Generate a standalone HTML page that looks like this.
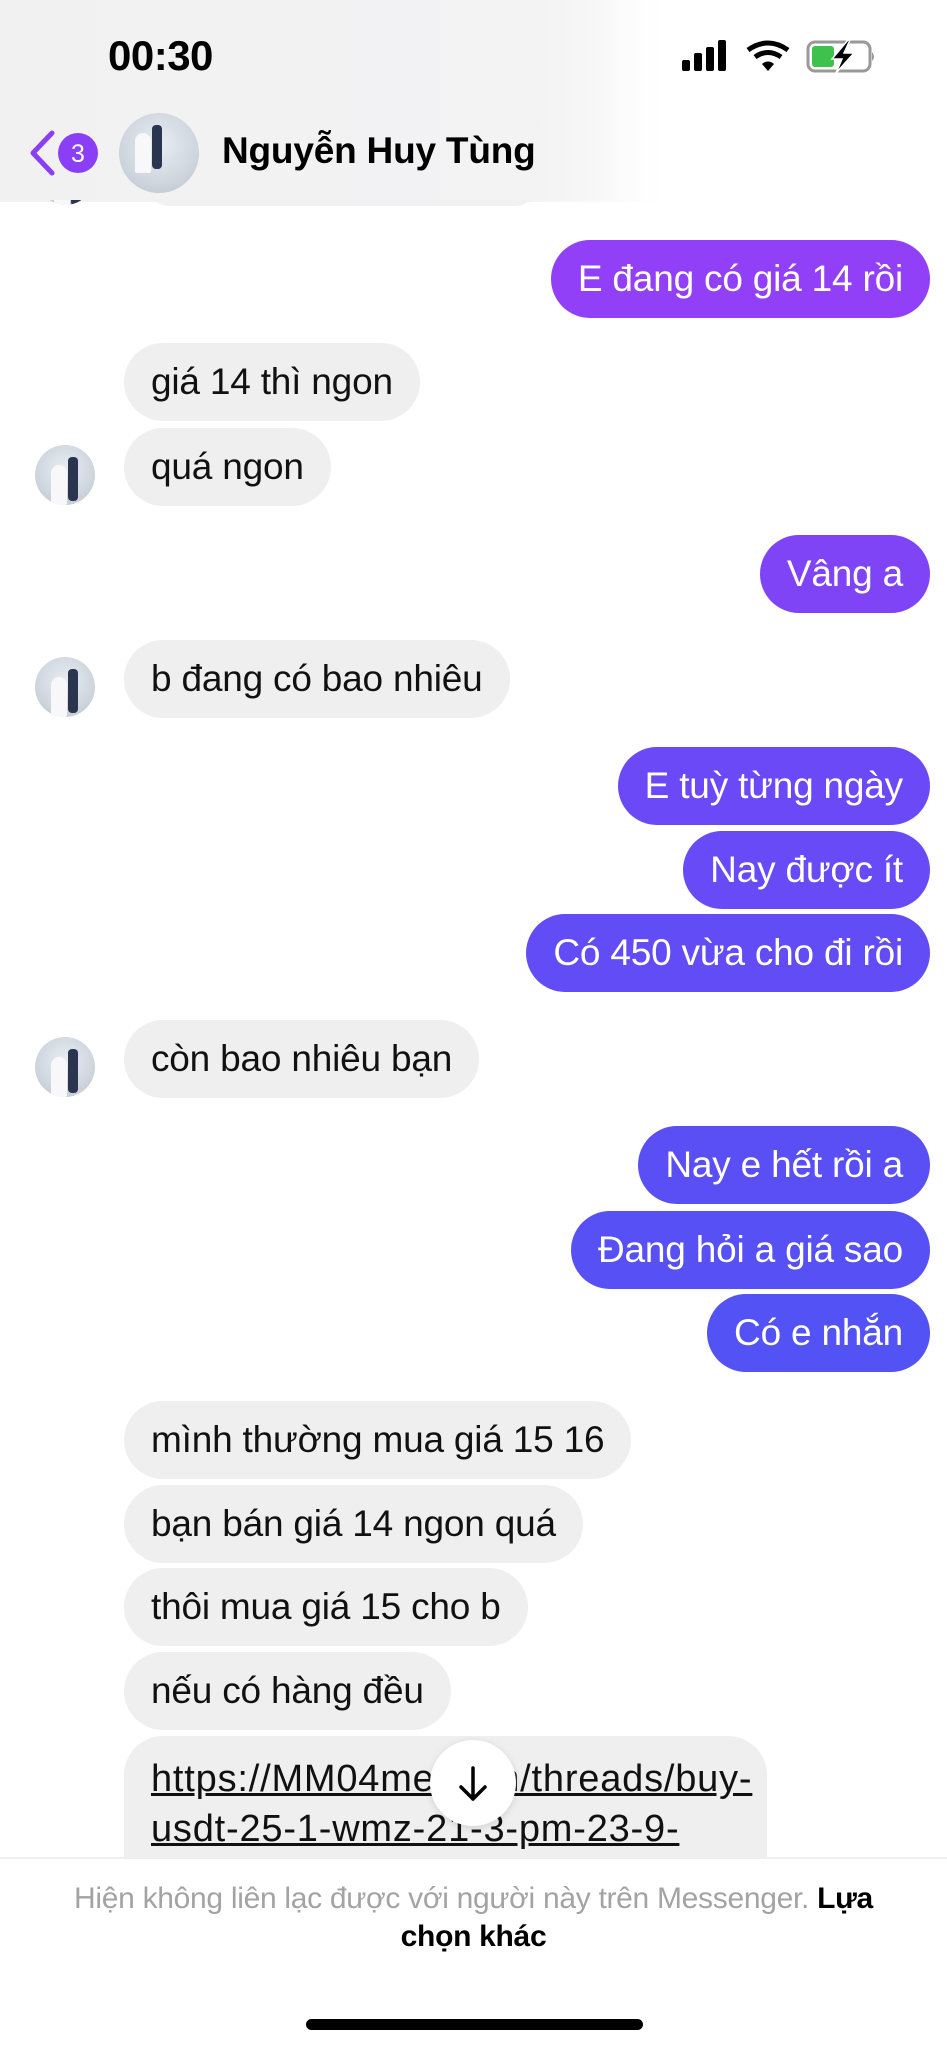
<!DOCTYPE html>
<html><head><meta charset="utf-8"><style>
*{margin:0;padding:0;box-sizing:border-box}
body{width:947px;height:2048px;background:#fff;position:relative;overflow:hidden;font-family:"Liberation Sans",sans-serif}
.b{position:absolute;height:78px;border-radius:39px;font-size:37px;line-height:78px;padding:0 27px;white-space:nowrap;letter-spacing:-0.2px}
.r{background:#efeff0;color:#111;left:124px}
.s{color:#fff;right:17px}
.av{position:absolute;width:60px;height:60px;border-radius:50%;left:35px;background:radial-gradient(circle at 50% 40%,#e8edf3 0,#cfd6de 60%,#b9c2cc 100%);overflow:hidden}
.av:after{content:"";position:absolute;left:33px;top:12px;width:10px;height:44px;background:#2a3550;border-radius:4px}
.av:before{content:"";position:absolute;left:16px;top:20px;width:16px;height:40px;background:#f8f8fa;border-radius:8px 8px 2px 2px}
</style></head><body>
<div style="position:absolute;left:0;top:0;width:947px;height:202px;background:linear-gradient(90deg,#f1f1f2 0,#f3f3f4 55%,#fff 70%)"></div>
<div style="position:absolute;left:0;top:202px;width:947px;height:1655px;background:#fff"></div>
<div style="position:absolute;left:142px;top:150px;width:400px;height:56px;border-radius:28px;background:#f1f1f2"></div>
<div class="av" style="top:150px;width:55px;height:55px;left:38px"></div>
<div style="position:absolute;left:0;top:0;width:620px;height:200px;background:linear-gradient(90deg,#f1f1f2 0,#f3f3f4 85%,rgba(245,245,246,0) 100%)"></div>
<div style="position:absolute;left:108px;top:32px;font-size:42px;font-weight:bold;color:#000;letter-spacing:-0.5px">00:30</div>
<svg style="position:absolute;left:682px;top:40px" width="200" height="34" viewBox="0 0 200 34">
<rect x="0" y="20" width="8" height="11" rx="2"/><rect x="12" y="13" width="8" height="18" rx="2"/><rect x="24" y="7" width="8" height="24" rx="2"/><rect x="36" y="0" width="8" height="31" rx="2"/>
<path d="M66 10 Q86 -4 106 10" stroke="#000" stroke-width="5" fill="none"/><path d="M73 17 Q86 8 99 17" stroke="#000" stroke-width="5" fill="none"/><path d="M80 24 L86 31 L92 24 Q86 19 80 24Z"/>
<rect x="126" y="2" width="62" height="29" rx="7" fill="none" stroke="#999" stroke-width="3"/><rect x="130" y="6" width="22" height="21" rx="3" fill="#3fc24d"/><path d="M190 12 v9 q4 -4 0 -9" fill="#999"/>
<path d="M166 0 L150 19 L160 19 L154 33 L172 13 L162 13 L168 0Z" fill="#000" stroke="#fff" stroke-width="1.5"/>
</svg>
<svg style="position:absolute;left:28px;top:130px" width="72" height="46"><path d="M24 3 L5 23 L24 43" stroke="#8a3ff6" stroke-width="5" fill="none" stroke-linecap="round" stroke-linejoin="round"/><circle cx="50" cy="23" r="20" fill="#8a3ff6"/><text x="50" y="32" font-size="25" fill="#fff" text-anchor="middle" font-family="Liberation Sans">3</text></svg>
<div class="av" style="left:119px;top:113px;width:80px;height:80px"></div>
<div style="position:absolute;left:222px;top:130px;font-size:37px;font-weight:bold;color:#000;letter-spacing:-0.2px">Nguyễn Huy Tùng</div>

<div class="b s" style="top:240px;background:#9140f7">E đang có giá 14 rồi</div>
<div class="b r" style="top:343px">giá 14 thì ngon</div>
<div class="b r" style="top:428px">quá ngon</div>
<div class="av" style="top:445px"></div>
<div class="b s" style="top:535px;background:#7f44f6">Vâng a</div>
<div class="b r" style="top:640px">b đang có bao nhiêu</div>
<div class="av" style="top:657px"></div>
<div class="b s" style="top:747px;background:#6c49f6">E tuỳ từng ngày</div>
<div class="b s" style="top:831px;background:#684af6">Nay được ít</div>
<div class="b s" style="top:914px;background:#624cf6">Có 450 vừa cho đi rồi</div>
<div class="b r" style="top:1020px">còn bao nhiêu bạn</div>
<div class="av" style="top:1037px"></div>
<div class="b s" style="top:1126px;background:#5a4ef5">Nay e hết rồi a</div>
<div class="b s" style="top:1211px;background:#5650f5">Đang hỏi a giá sao</div>
<div class="b s" style="top:1294px;background:#5252f5">Có e nhắn</div>
<div class="b r" style="top:1401px">mình thường mua giá 15 16</div>
<div class="b r" style="top:1485px">bạn bán giá 14 ngon quá</div>
<div class="b r" style="top:1568px">thôi mua giá 15 cho b</div>
<div class="b r" style="top:1652px">nếu có hàng đều</div>
<div style="position:absolute;left:124px;top:1736px;width:643px;height:160px;border-radius:39px;background:#efeff0;padding:18px 27px;font-size:38px;line-height:50px;color:#111;text-decoration:underline;letter-spacing:0.8px;white-space:nowrap;overflow:hidden">https://MM04me.com/threads/buy-<br>usdt-25-1-wmz-21-3-pm-23-9-</div>
<div style="position:absolute;left:430px;top:1740px;width:86px;height:86px;border-radius:50%;background:#fff;box-shadow:0 2px 8px rgba(0,0,0,.12)"></div>
<svg style="position:absolute;left:455px;top:1765px" width="36" height="40"><path d="M18 3 V34 M6 22 L18 34 L30 22" stroke="#000" stroke-width="3.5" fill="none" stroke-linecap="round" stroke-linejoin="round"/></svg>
<div style="position:absolute;left:0;top:1857px;width:947px;height:191px;background:#fff;border-top:2px solid #eee"></div>
<div style="position:absolute;left:0;top:1880px;width:947px;text-align:center;font-size:30px;line-height:38px;color:#a3a3a3;letter-spacing:-0.3px">Hiện không liên lạc được với người này trên Messenger. <span style="color:#000;font-weight:bold">Lựa<br>chọn khác</span></div>
<div style="position:absolute;left:306px;top:2019px;width:337px;height:11px;border-radius:6px;background:#000"></div>
</body></html>
